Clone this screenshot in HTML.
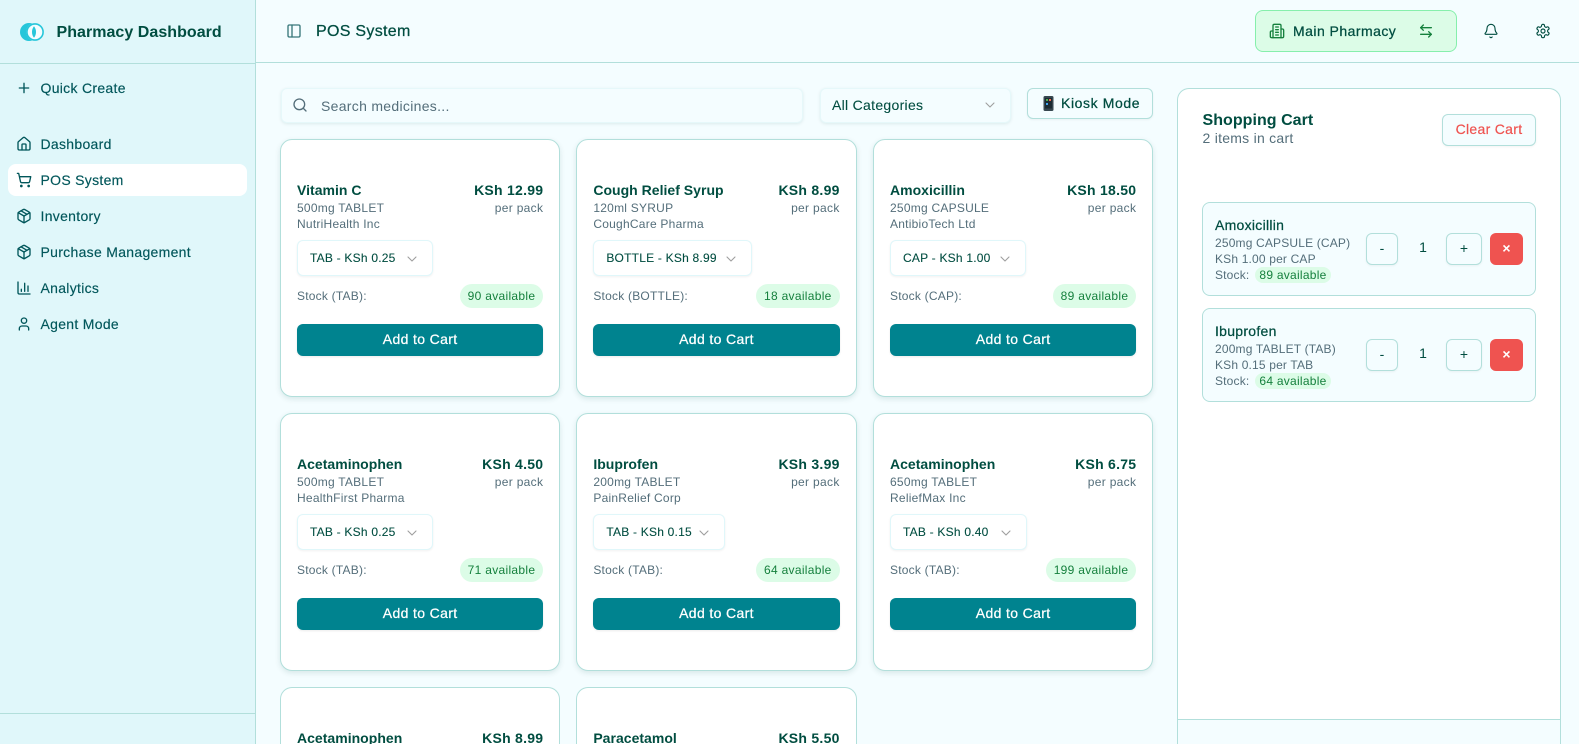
<!DOCTYPE html>
<html lang="en"><head><meta charset="utf-8"><title>POS System</title>
<style>
*{box-sizing:border-box}
html,body{margin:0;padding:0;width:1579px;height:744px;overflow:hidden;background:#f4fdff;font-family:"Liberation Sans",sans-serif;color:#004d40}
#root{position:relative;width:1579px;height:744px;overflow:hidden;background:#f4fdff;contain:paint}
.a,.t{position:absolute}
.t{white-space:nowrap;line-height:1}
svg{position:absolute;fill:none;stroke:currentColor;stroke-width:2;stroke-linecap:round;stroke-linejoin:round}
#side{position:absolute;left:0;top:0;width:256px;height:744px;background:#e0f7fa;border-right:1px solid #b2dfdb}
.nav{font-size:14px;letter-spacing:.3px;color:#00565a;left:40.5px;-webkit-text-stroke:.15px #00565a}
.ni{left:16px;width:16px;height:16px;color:#00565a}
.card{position:absolute;width:280.33px;height:258px;background:#fff;border:1px solid #b2dfdb;border-radius:12px;box-shadow:0 2px 6px rgba(0,77,64,.12)}
.cut{height:57px;border-bottom:0;border-radius:12px 12px 0 0;overflow:hidden;box-shadow:none}
.n{left:16px;top:43px;font-size:14px;font-weight:700;letter-spacing:.02px;color:#004d40}
.p{right:16px;top:43px;font-size:14px;font-weight:700;letter-spacing:.26px;color:#004d40}
.s{left:16px;font-size:12px;letter-spacing:.24px;color:#546e7a}
.pp{right:16px;top:62px;font-size:12px;letter-spacing:.32px;color:#546e7a}
.sel{position:absolute;left:16px;top:100px;height:36px;background:#fff;border:1px solid #e0f7fa;border-radius:6px;box-shadow:0 1px 2px rgba(0,0,0,.06)}
.sel span{position:absolute;left:12px;top:11px;font-size:12px;line-height:1;white-space:nowrap;letter-spacing:.22px;color:#004d40;-webkit-text-stroke:.1px #004d40}
.sel svg{top:10px;right:12px;width:16px;height:16px;color:#9e9e9e;stroke-width:1.6}
.st{left:16px;top:150px;font-size:12px;letter-spacing:.22px;color:#546e7a}
.b{position:absolute;right:16px;top:144px;height:24px;padding:0 8px;border-radius:12px;background:#dcfce7;color:#15803d;font-size:12px;line-height:24px;letter-spacing:.3px;white-space:nowrap}
.add{position:absolute;left:16px;right:16px;top:184px;height:32px;background:#00838f;color:#fff;border-radius:6px;text-align:center;font-size:14px;line-height:31px;letter-spacing:.36px;-webkit-text-stroke:.25px #fff;box-shadow:0 1px 2px rgba(0,0,0,.08)}
.item{position:absolute;left:1202px;width:333.5px;height:94px;background:#f4fdff;border:1px solid #b2dfdb;border-radius:8px}
.iname{left:12px;top:15px;font-size:14px;letter-spacing:.28px;color:#004d40;-webkit-text-stroke:.25px #004d40}
.il{left:12px;font-size:12px;letter-spacing:.17px;color:#546e7a}
.ib{position:absolute;left:52px;top:64px;width:76px;height:16px;border-radius:8px;background:#dcfce7;color:#15803d;font-size:12px;line-height:16px;text-align:center;letter-spacing:.26px;white-space:nowrap}
.q{position:absolute;top:30px;height:32px;background:#f4fdff;border:1px solid #b2dfdb;border-radius:6px;text-align:center;font-size:14px;line-height:29px;color:#004d40;box-shadow:0 1px 2px rgba(0,0,0,.05)}
.x{position:absolute;left:287px;top:30px;width:33px;height:32px;background:#ef5350;border-radius:6px;color:#fff;text-align:center;font-size:14px;font-weight:700;line-height:31px}
.one{left:216px;top:37px;width:8px;text-align:center;font-size:14px;color:#004d40}
</style></head><body>
<div id="root">

<div id="side">
<svg class="a" style="left:20px;top:23px;width:24px;height:18px;stroke:none" viewBox="0 0 24 18"><circle cx="9" cy="9" r="9" fill="#26c6da"/><circle cx="15" cy="9" r="8.8" fill="#f4fdff"/><circle cx="15" cy="9" r="8.1" fill="none" stroke="#26c6da" stroke-width="1.6"/><path d="M14 3.2a9 9 0 0 1 2 5.8a9 9 0 0 1-2 5.8a9 9 0 0 1-2-5.8a9 9 0 0 1 2-5.8z" fill="#26c6da"/></svg>
<div class="t" style="left:56.5px;top:24.5px;font-size:16px;font-weight:700;letter-spacing:.04px;color:#004d40">Pharmacy Dashboard</div>
<div class="a" style="left:0;top:63px;width:255px;height:1px;background:#b2dfdb"></div>
<svg class="ni" style="top:80px" viewBox="0 0 24 24"><path d="M5 12h14M12 5v14"/></svg>
<div class="t nav" style="top:81px">Quick Create</div>
<div class="a" style="left:8px;top:164px;width:239px;height:32px;background:#fff;border-radius:8px"></div>
<svg class="ni" style="top:136px" viewBox="0 0 24 24"><path d="M15 21v-8a1 1 0 0 0-1-1h-4a1 1 0 0 0-1 1v8"/><path d="M3 10a2 2 0 0 1 .709-1.528l7-5.999a2 2 0 0 1 2.582 0l7 5.999A2 2 0 0 1 21 10v9a2 2 0 0 1-2 2H5a2 2 0 0 1-2-2z"/></svg>
<div class="t nav" style="top:137px">Dashboard</div>
<svg class="ni" style="top:172px" viewBox="0 0 24 24"><circle cx="8" cy="21" r="1"/><circle cx="19" cy="21" r="1"/><path d="M2.05 2.05h2l2.66 12.42a2 2 0 0 0 2 1.58h9.78a2 2 0 0 0 1.95-1.57l1.65-7.43H5.12"/></svg>
<div class="t nav" style="top:173px">POS System</div>
<svg class="ni" style="top:208px" viewBox="0 0 24 24"><path d="M11 21.73a2 2 0 0 0 2 0l7-4A2 2 0 0 0 21 16V8a2 2 0 0 0-1-1.73l-7-4a2 2 0 0 0-2 0l-7 4A2 2 0 0 0 3 8v8a2 2 0 0 0 1 1.73z"/><path d="M12 22V12"/><path d="M3.29 7 12 12l8.71-5"/><path d="m7.5 4.27 9 5.15"/></svg>
<div class="t nav" style="top:209px">Inventory</div>
<svg class="ni" style="top:244px" viewBox="0 0 24 24"><path d="M11 21.73a2 2 0 0 0 2 0l7-4A2 2 0 0 0 21 16V8a2 2 0 0 0-1-1.73l-7-4a2 2 0 0 0-2 0l-7 4A2 2 0 0 0 3 8v8a2 2 0 0 0 1 1.73z"/><path d="M12 22V12"/><path d="M3.29 7 12 12l8.71-5"/><path d="m7.5 4.27 9 5.15"/></svg>
<div class="t nav" style="top:245px">Purchase Management</div>
<svg class="ni" style="top:280px" viewBox="0 0 24 24"><path d="M3 3v16a2 2 0 0 0 2 2h16"/><path d="M8 17v-3"/><path d="M13 17V5"/><path d="M18 17V9"/></svg>
<div class="t nav" style="top:281px">Analytics</div>
<svg class="ni" style="top:316px" viewBox="0 0 24 24"><path d="M19 21v-2a4 4 0 0 0-4-4H9a4 4 0 0 0-4 4v2"/><circle cx="12" cy="7" r="4"/></svg>
<div class="t nav" style="top:317px">Agent Mode</div>
<div class="a" style="left:0;top:713px;width:255px;height:1px;background:#b2dfdb"></div>
</div>

<div class="a" style="left:256px;top:62px;width:1323px;height:1px;background:#b2dfdb"></div>
<svg style="left:286px;top:23px;width:16px;height:16px;color:#37777a" viewBox="0 0 24 24"><rect x="3" y="3" width="18" height="18" rx="2"/><path d="M9 3v18"/></svg>
<div class="t" style="left:316px;top:23.5px;font-size:16px;letter-spacing:.3px;color:#004d40;-webkit-text-stroke:.25px #004d40">POS System</div>

<div class="a" style="left:1255px;top:10px;width:202px;height:42px;background:#dcfce7;border:1px solid #86efac;border-radius:8px"></div>
<svg style="left:1268.5px;top:23px;width:16px;height:16px;color:#15803d" viewBox="0 0 24 24"><path d="M6 22V4a2 2 0 0 1 2-2h8a2 2 0 0 1 2 2v18Z"/><path d="M6 12H4a2 2 0 0 0-2 2v6a2 2 0 0 0 2 2h2"/><path d="M18 9h2a2 2 0 0 1 2 2v9a2 2 0 0 1-2 2h-2"/><path d="M10 6h4M10 10h4M10 14h4M10 18h4"/></svg>
<div class="t" style="left:1293px;top:24px;font-size:14px;letter-spacing:.46px;color:#004d40;-webkit-text-stroke:.25px #004d40">Main Pharmacy</div>
<svg style="left:1418px;top:23px;width:16px;height:16px;color:#15803d" viewBox="0 0 24 24"><path d="M8 3 4 7l4 4"/><path d="M4 7h16"/><path d="m16 21 4-4-4-4"/><path d="M20 17H4"/></svg>
<svg style="left:1483px;top:23px;width:16px;height:16px;color:#004d40;stroke-width:1.7" viewBox="0 0 24 24"><path d="M10.268 21a2 2 0 0 0 3.464 0"/><path d="M3.262 15.326A1 1 0 0 0 4 17h16a1 1 0 0 0 .74-1.673C19.41 13.956 18 12.499 18 8A6 6 0 0 0 6 8c0 4.499-1.411 5.956-2.738 7.326"/></svg>
<svg style="left:1535px;top:23px;width:16px;height:16px;color:#004d40;stroke-width:1.7" viewBox="0 0 24 24"><path d="M12.22 2h-.44a2 2 0 0 0-2 2v.18a2 2 0 0 1-1 1.73l-.43.25a2 2 0 0 1-2 0l-.15-.08a2 2 0 0 0-2.73.73l-.22.38a2 2 0 0 0 .73 2.73l.15.1a2 2 0 0 1 1 1.72v.51a2 2 0 0 1-1 1.74l-.15.09a2 2 0 0 0-.73 2.73l.22.38a2 2 0 0 0 2.73.73l.15-.08a2 2 0 0 1 2 0l.43.25a2 2 0 0 1 1 1.73V20a2 2 0 0 0 2 2h.44a2 2 0 0 0 2-2v-.18a2 2 0 0 1 1-1.73l.43-.25a2 2 0 0 1 2 0l.15.08a2 2 0 0 0 2.73-.73l.22-.39a2 2 0 0 0-.73-2.73l-.15-.08a2 2 0 0 1-1-1.74v-.5a2 2 0 0 1 1-1.74l.15-.09a2 2 0 0 0 .73-2.73l-.22-.38a2 2 0 0 0-2.73-.73l-.15.08a2 2 0 0 1-2 0l-.43-.25a2 2 0 0 1-1-1.73V4a2 2 0 0 0-2-2z"/><circle cx="12" cy="12" r="3"/></svg>

<div class="a" style="left:280.5px;top:87.5px;width:522.5px;height:35px;background:#f4fdff;border:1px solid #e6f8fa;border-radius:6px;box-shadow:0 1px 3px rgba(0,77,64,.1)"></div>
<svg style="left:292px;top:97px;width:16px;height:16px;color:#546e7a" viewBox="0 0 24 24"><circle cx="11" cy="11" r="8"/><path d="m21 21-4.3-4.3"/></svg>
<div class="t" style="left:321px;top:99px;font-size:14px;letter-spacing:.3px;color:#546e7a">Search medicines...</div>

<div class="a" style="left:819.5px;top:87.5px;width:191.5px;height:35px;background:#f4fdff;border:1px solid #e6f8fa;border-radius:6px;box-shadow:0 1px 3px rgba(0,77,64,.1)"></div>
<div class="t" style="left:832px;top:98px;font-size:14px;letter-spacing:.3px;color:#004d40;-webkit-text-stroke:.1px #004d40">All Categories</div>
<svg style="left:982px;top:97px;width:16px;height:16px;color:#9e9e9e;stroke-width:1.6" viewBox="0 0 24 24"><path d="m6 9 6 6 6-6"/></svg>

<div class="a" style="left:1027px;top:87.5px;width:126px;height:31.5px;background:#f4fdff;border:1px solid #b2dfdb;border-radius:6px;box-shadow:0 1px 2px rgba(0,0,0,.05)"></div>
<svg style="left:1043px;top:96px;width:11px;height:15px;stroke:none" viewBox="0 0 11 15"><rect x="0.5" y="0" width="10" height="15" rx="1.5" fill="#37474f"/><rect x="2" y="2" width="7" height="10.5" fill="#1c2b33"/><rect x="3" y="3" width="2" height="2" fill="#4caf50"/><rect x="6" y="3" width="2" height="2" fill="#ef6c50"/><rect x="3" y="7" width="2" height="2" fill="#42a5f5"/></svg>
<div class="t" style="left:1061px;top:96px;font-size:14px;letter-spacing:.6px;color:#004d40;-webkit-text-stroke:.25px #004d40">Kiosk Mode</div>

<!-- Row 1 -->
<div class="card" style="left:280px;top:139px"><div class="t n">Vitamin C</div><div class="t p">KSh 12.99</div><div class="t s" style="top:62px">500mg TABLET</div><div class="t pp">per pack</div><div class="t s" style="top:78px">NutriHealth Inc</div><div class="sel" style="width:136px"><span>TAB - KSh 0.25</span><svg viewBox="0 0 24 24"><path d="m6 9 6 6 6-6"/></svg></div><div class="t st">Stock (TAB):</div><div class="b">90 available</div><div class="add">Add to Cart</div></div>
<div class="card" style="left:576.33px;top:139px"><div class="t n">Cough Relief Syrup</div><div class="t p">KSh 8.99</div><div class="t s" style="top:62px">120ml SYRUP</div><div class="t pp">per pack</div><div class="t s" style="top:78px">CoughCare Pharma</div><div class="sel" style="width:158.5px"><span>BOTTLE - KSh 8.99</span><svg viewBox="0 0 24 24"><path d="m6 9 6 6 6-6"/></svg></div><div class="t st">Stock (BOTTLE):</div><div class="b">18 available</div><div class="add">Add to Cart</div></div>
<div class="card" style="left:873px;top:139px"><div class="t n">Amoxicillin</div><div class="t p">KSh 18.50</div><div class="t s" style="top:62px">250mg CAPSULE</div><div class="t pp">per pack</div><div class="t s" style="top:78px">AntibioTech Ltd</div><div class="sel" style="width:136px"><span>CAP - KSh 1.00</span><svg viewBox="0 0 24 24"><path d="m6 9 6 6 6-6"/></svg></div><div class="t st">Stock (CAP):</div><div class="b">89 available</div><div class="add">Add to Cart</div></div>
<!-- Row 2 -->
<div class="card" style="left:280px;top:413px"><div class="t n">Acetaminophen</div><div class="t p">KSh 4.50</div><div class="t s" style="top:62px">500mg TABLET</div><div class="t pp">per pack</div><div class="t s" style="top:78px">HealthFirst Pharma</div><div class="sel" style="width:136px"><span>TAB - KSh 0.25</span><svg viewBox="0 0 24 24"><path d="m6 9 6 6 6-6"/></svg></div><div class="t st">Stock (TAB):</div><div class="b">71 available</div><div class="add">Add to Cart</div></div>
<div class="card" style="left:576.33px;top:413px"><div class="t n">Ibuprofen</div><div class="t p">KSh 3.99</div><div class="t s" style="top:62px">200mg TABLET</div><div class="t pp">per pack</div><div class="t s" style="top:78px">PainRelief Corp</div><div class="sel" style="width:132px"><span>TAB - KSh 0.15</span><svg viewBox="0 0 24 24"><path d="m6 9 6 6 6-6"/></svg></div><div class="t st">Stock (TAB):</div><div class="b">64 available</div><div class="add">Add to Cart</div></div>
<div class="card" style="left:873px;top:413px"><div class="t n">Acetaminophen</div><div class="t p">KSh 6.75</div><div class="t s" style="top:62px">650mg TABLET</div><div class="t pp">per pack</div><div class="t s" style="top:78px">ReliefMax Inc</div><div class="sel" style="width:137px"><span>TAB - KSh 0.40</span><svg viewBox="0 0 24 24"><path d="m6 9 6 6 6-6"/></svg></div><div class="t st">Stock (TAB):</div><div class="b">199 available</div><div class="add">Add to Cart</div></div>
<!-- Row 3 -->
<div class="card cut" style="left:280px;top:687px"><div class="t n">Acetaminophen</div><div class="t p">KSh 8.99</div></div>
<div class="card cut" style="left:576.33px;top:687px"><div class="t n">Paracetamol</div><div class="t p">KSh 5.50</div></div>
<!-- Cart -->
<div class="a" style="left:1177px;top:87.5px;width:384px;height:656.5px;background:#fff;border:1px solid #b2dfdb;border-bottom:0;border-radius:12px 12px 0 0;overflow:hidden">
<div class="a" style="left:0;right:0;top:630px;height:26px;background:#f4fdff;border-top:1px solid #b2dfdb"></div>
</div>
<div class="t" style="left:1202.5px;top:112.5px;font-size:16px;font-weight:700;letter-spacing:.04px;color:#004d40">Shopping Cart</div>
<div class="t" style="left:1202.5px;top:131px;font-size:14px;letter-spacing:.26px;color:#546e7a">2 items in cart</div>
<div class="a" style="left:1442px;top:114px;width:94px;height:32px;background:#f4fdff;border:1px solid #b2dfdb;border-radius:6px;text-align:center;font-size:14px;line-height:29px;letter-spacing:.3px;color:#ef5350;-webkit-text-stroke:.2px #ef5350;box-shadow:0 1px 2px rgba(0,0,0,.05)">Clear Cart</div>

<div class="item" style="top:202px"><div class="t iname">Amoxicillin</div><div class="t il" style="top:34px">250mg CAPSULE (CAP)</div><div class="t il" style="top:50px">KSh 1.00 per CAP</div><div class="t il" style="top:66px">Stock:</div><div class="ib">89 available</div><div class="q" style="left:163px;width:32px">-</div><div class="t one">1</div><div class="q" style="left:243px;width:36px">+</div><div class="x">×</div></div>
<div class="item" style="top:308px"><div class="t iname">Ibuprofen</div><div class="t il" style="top:34px">200mg TABLET (TAB)</div><div class="t il" style="top:50px">KSh 0.15 per TAB</div><div class="t il" style="top:66px">Stock:</div><div class="ib">64 available</div><div class="q" style="left:163px;width:32px">-</div><div class="t one">1</div><div class="q" style="left:243px;width:36px">+</div><div class="x">×</div></div>
</div>
</body></html>
